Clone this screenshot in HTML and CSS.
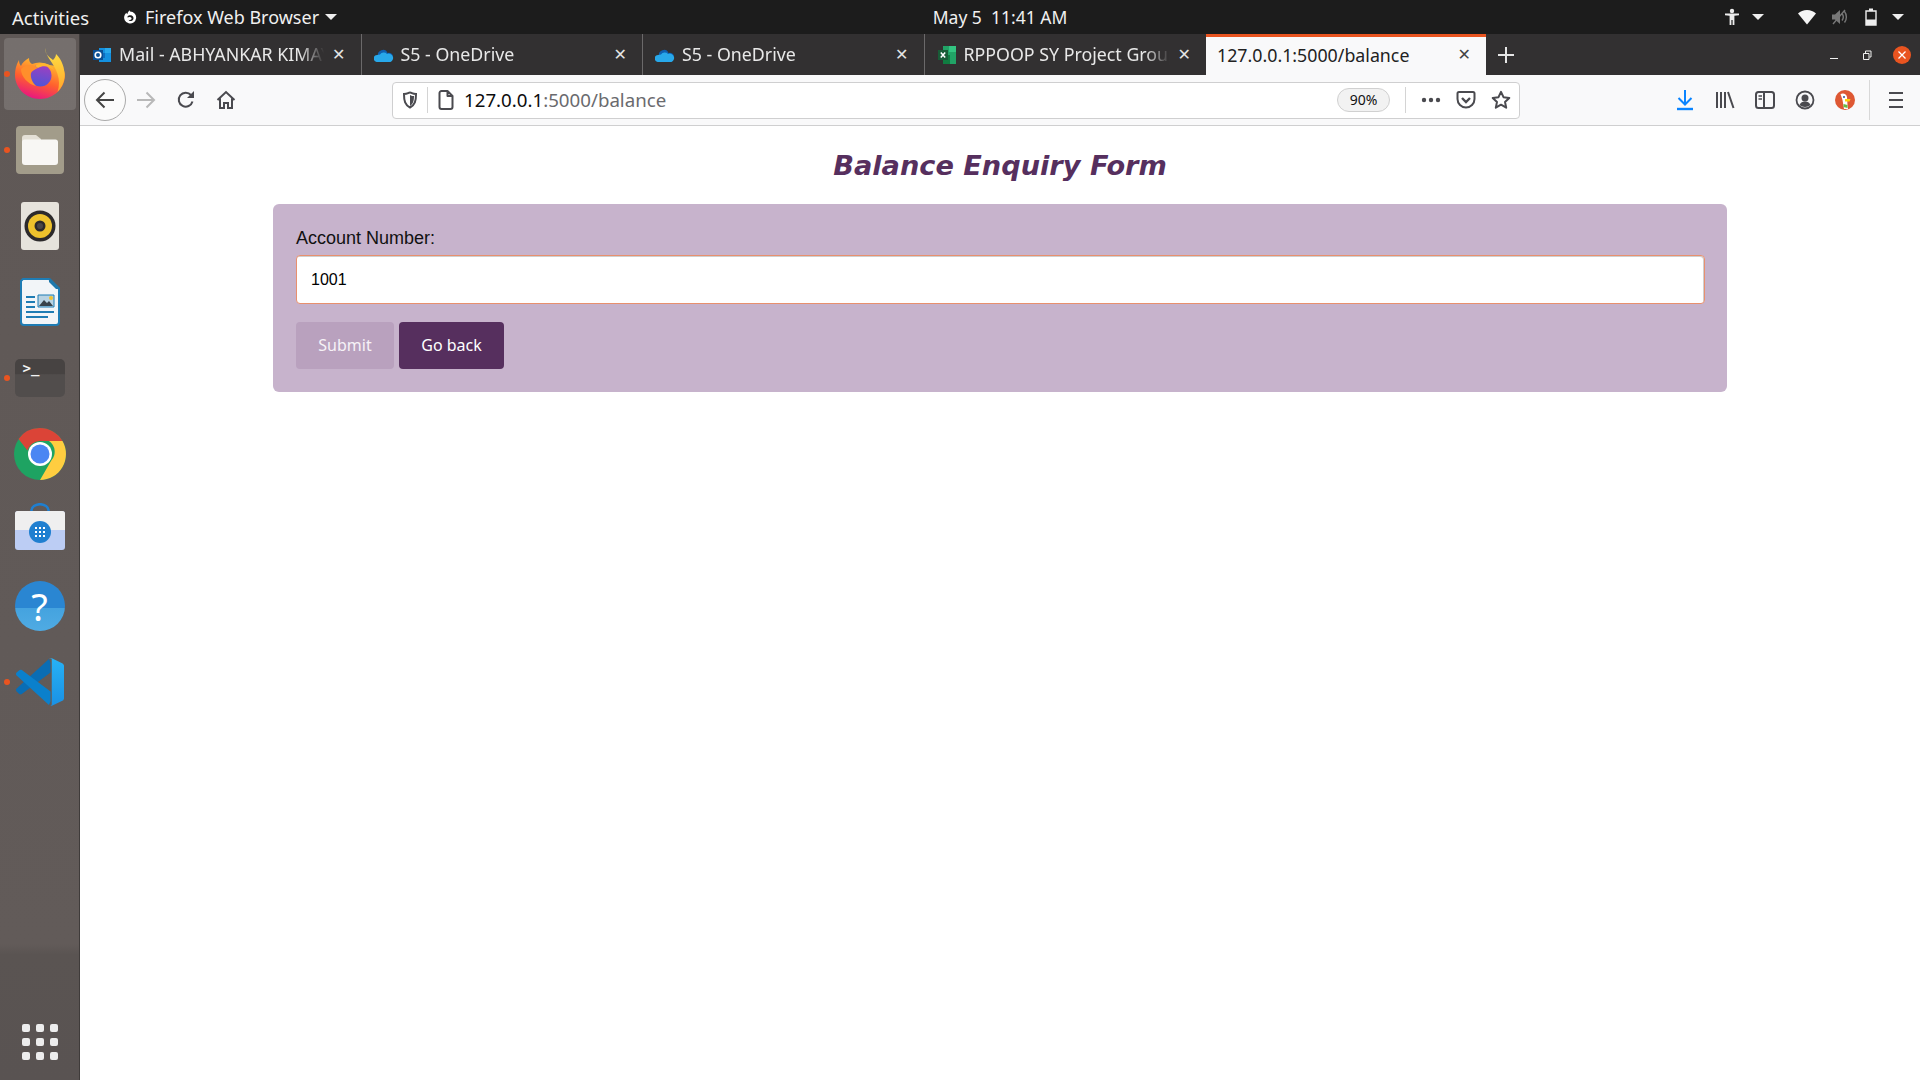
FILE: index.html
```html
<!DOCTYPE html>
<html lang="en">
<head>
<meta charset="utf-8">
<title>Balance Enquiry Form</title>
<link rel="stylesheet" href="styles.css">
</head>
<body>
<svg class="defs" width="0" height="0" aria-hidden="true">
  <defs>
    <linearGradient id="ffBody" x1="0.75" y1="0.1" x2="0.4" y2="1">
      <stop offset="0" stop-color="#ffc02e"/><stop offset="0.55" stop-color="#ff5f2e"/><stop offset="1" stop-color="#e8177f"/>
    </linearGradient>
    <linearGradient id="ffFlame" x1="0.5" y1="0" x2="0.5" y2="1">
      <stop offset="0" stop-color="#ffe445"/><stop offset="1" stop-color="#ffa52b"/>
    </linearGradient>
    <linearGradient id="ffGlobe" x1="0.6" y1="0" x2="0.4" y2="1">
      <stop offset="0" stop-color="#a13fc0"/><stop offset="1" stop-color="#4d55d6"/>
    </linearGradient>
    <linearGradient id="vsRight" x1="0" y1="0" x2="0" y2="1">
      <stop offset="0" stop-color="#27b2f6"/><stop offset="1" stop-color="#1a91e4"/>
    </linearGradient>
  </defs>
</svg>

<header class="topbar">
  <div class="top-left">
    <span class="top-activities">Activities</span>
    <span class="top-app">
      <svg class="top-app-icon" viewBox="0 0 16 16"><path fill="#fff" d="M8 2.500A6 6 0 1 1 2.600 6.200C3 5 3.800 4.200 4.600 3.700 4.500 4.600 4.900 5 5.400 5.200 5.500 3.600 6.500 2.200 8 1.300 7.800 1.900 7.900 2.200 8 2.500z"/><path fill="#1d1d1d" d="M5.500 7.500c1-1.500 4-2 5.500 0 1 1.500 .5 3.500-1 4.200-1.500.6-3 0-3.500-1 1 .5 2.500.3 3-.7.300-.8-.2-1.600-1-1.800-1-.3-2 0-3 .300z"/></svg>
      Firefox Web Browser
      <i class="caret"></i>
    </span>
  </div>
  <div class="top-clock">May 5&nbsp; 11:41 AM</div>
  <div class="top-right">
    <svg class="tray-a11y" width="16" height="18" viewBox="0 0 16 18"><circle cx="8" cy="3" r="2.200" fill="#eee"/><path fill="#eee" d="M1 5.500h14v1.700l-4.600.6V17H8.600v-5H7.400v5H5.600V7.800L1 7.200z"/></svg>
    <i class="caret caret-a11y"></i>
    <svg class="tray-wifi" width="20" height="16" viewBox="0 0 20 16"><path fill="#f4f4f4" d="M10 15.500 1 4.500C3.400 2.400 6.500 1 10 1s6.600 1.400 9 3.500z"/></svg>
    <svg class="tray-vol" width="18" height="18" viewBox="0 0 18 18"><path fill="#777" d="M1 6.500h3L9 2v14l-5-4.500H1z"/><path fill="none" stroke="#777" stroke-width="1.400" d="M11 5.500c1.500 2 1.500 5 0 7M13.500 3.500c2.500 3.200 2.500 7.800 0 11M2 16 14 2"/></svg>
    <svg class="tray-batt" width="12" height="18" viewBox="0 0 12 18"><path fill="none" stroke="#eee" stroke-width="1.400" d="M1 3h10v14H1z"/><path fill="#eee" d="M4 .5h4V3H4zM1 11.500h10V17H1z"/></svg>
    <i class="caret caret-batt"></i>
  </div>
</header>

<div class="desktop">
  <nav class="dock">
    <div class="dock-item is-active is-running">
      <svg width="50" height="52" viewBox="0 0 50 52">
        <path fill="url(#ffBody)" d="M25 51C11 51 0 40 0 27c0-5 1-10 4-15 0 3 1 5 2 6 1-3 4-6 8-8 0 3 1 5 3 6 5-2 10-2 15 0 7 3 18 1 18 11 0 13-11 24-25 24z"/>
        <path fill="url(#ffFlame)" d="M30 0c0 6 4 9 8 12 2-2 3-4 3-6 6 6 9 14 8.500 23-.5 6-3 11-7 15 2-6 2-12 0-18C40 16 31 10 30 0z"/>
        <circle cx="25.500" cy="27.500" r="11" fill="url(#ffGlobe)"/>
        <path fill="#ff8f2b" d="M6 21c4-4 9-5 14-3l3 2c-3 1-6 3-7 5-1 5 2 10 5 13-8-2-15-9-15-17z"/>
        <path fill="#ffb52e" d="M20 18c6-5 15-3 19 4-5-4-11-5-16-2z"/>
      </svg>
    </div>
    <div class="dock-item is-running">
      <div class="dock-files">
        <svg width="36" height="30" viewBox="0 0 36 30"><path fill="#e4e0d6" d="M3 0h11l5 4v6H0V3a3 3 0 0 1 3-3z"/><path fill="#f8f7f4" d="M0 7c0-1.500 1-2.500 2.500-2.500h31C35 4.500 36 5.500 36 7v20a3 3 0 0 1-3 3H3a3 3 0 0 1-3-3z"/></svg>
      </div>
    </div>
    <div class="dock-item">
      <div class="dock-speaker">
        <svg width="32" height="32" viewBox="0 0 32 32"><circle cx="16" cy="16" r="15.500" fill="#2c2a2b"/><circle cx="16" cy="16" r="12" fill="#eec22c"/><circle cx="16" cy="16" r="5.500" fill="#2c2a2b"/><circle cx="16" cy="16" r="3" fill="#4a4748"/></svg>
      </div>
    </div>
    <div class="dock-item">
      <svg width="40" height="48" viewBox="0 0 40 48">
        <path fill="#f2f5f8" stroke="#1e7cb4" stroke-width="2" d="M3 1h26l10 10v33a3 3 0 0 1-3 3H4a3 3 0 0 1-3-3V3z"/>
        <path fill="#1e78ab" d="M30 0l10 10v1h-4l-7-7V0z"/>
        <path fill="#1e7cb4" d="M6 18h9v2H6zM6 23h9v2H6zM6 28h9v2H6zM6 33h28v2H6zM6 38h22v2H6z"/>
        <path fill="#b9d3e3" stroke="#1e7cb4" d="M18 17h16v12H18z"/>
        <path fill="#39424a" d="M19 28l5-6 3 3 2-2 4 5z"/>
        <circle cx="31" cy="20" r="2" fill="#f2c230"/>
      </svg>
    </div>
    <div class="dock-item is-running">
      <div class="dock-term"><span class="dock-term-text">&gt;_</span></div>
    </div>
    <div class="dock-item">
      <svg width="52" height="52" viewBox="0 0 52 52">
        <circle cx="26" cy="26" r="26" fill="#1ea362"/>
        <path fill="#db4437" d="M26 0a26 26 0 0 1 22.500 13H26a13 13 0 0 0-12.500 9.500L4.500 11A26 26 0 0 1 26 0z"/>
        <path fill="#ffcd40" d="M48.500 13A26 26 0 0 1 26 52l11.300-19.500A13 13 0 0 0 35 13z"/>
        <circle cx="26" cy="26" r="12" fill="#fff"/>
        <circle cx="26" cy="26" r="9.500" fill="#4a86f3"/>
      </svg>
    </div>
    <div class="dock-item">
      <svg class="dock-store" width="50" height="47" viewBox="0 0 50 47">
        <path fill="none" stroke="#1f7fd0" stroke-width="2.500" d="M16.500 10V7.500a8.500 6.300 0 0 1 17 0V10"/>
        <rect y="8" width="50" height="39" rx="3" fill="#bccdf4"/>
        <path fill="#efefef" d="M3 8h44a3 3 0 0 1 3 3v16H0V11a3 3 0 0 1 3-3z"/>
        <circle cx="25" cy="29" r="11" fill="#1f7fd0"/>
        <path fill="#fff" d="M20 24h2v2h-2zM24 24h2v2h-2zM28 24h2v2h-2zM20 28h2v2h-2zM24 28h2v2h-2zM28 28h2v2h-2zM20 32h2v2h-2zM24 32h2v2h-2zM28 32h2v2h-2z"/>
      </svg>
    </div>
    <div class="dock-item">
      <div class="dock-help"><span class="dock-help-mark">?</span></div>
    </div>
    <div class="dock-item is-running">
      <svg width="48" height="50" viewBox="0 0 100 100">
        <path fill="#0a6db4" d="M1.300 63.600 68.700 2.100 72 10v20L12.100 75c-1.600 1.200-3.800 1.100-5.300-.2l-5.500-5c-1.800-1.700-1.800-4.500 0-6.200z"/>
        <path fill="#0a80cc" d="M1.300 36.500c-1.800-1.700-1.800-4.600 0-6.200l5.500-5c1.500-1.300 3.700-1.400 5.300-.2L72 70v20l-3.300 7.900z"/>
        <path fill="url(#vsRight)" d="M69.500 1.500c1.900-1.400 4.300-1.600 6.400-.6l20.100 9.900c2.600 1.100 4 3.300 4 5.600v67.200c0 2.400-1.300 4.600-3.500 5.600l-20.600 9.900c-2 .9-4.500.7-6.400-.6 2 2 5 .5 5-2V3.500c0-2.500-3-4-5-2z"/>
      </svg>
    </div>
    <div class="dock-grid">
      <i></i><i></i><i></i><i></i><i></i><i></i><i></i><i></i><i></i>
    </div>
  </nav>

  <div class="browser">
    <div class="tabbar">
      <div class="tab">
        <svg class="tab-icon" width="20" height="20" viewBox="0 0 20 20"><path fill="#1490df" d="M7 3h12v14H7z"/><path fill="#28a8ea" d="M13 3h6v5h-6z"/><path fill="#0f6cbd" d="M7 8h6v5H7z"/><path fill="#0a4f94" d="M1 5h10v10H1z"/><circle cx="6" cy="10" r="2.800" fill="none" stroke="#fff" stroke-width="1.600"/></svg>
        <span class="tab-title">Mail - ABHYANKAR KIMAYA</span>
        <span class="tab-close">&#10005;</span>
      </div>
      <div class="tab">
        <svg class="tab-icon" width="20" height="14" viewBox="0 0 20 14"><path fill="#0f5fb0" d="M4 8a5 5 0 0 1 9.500-3A4 4 0 0 1 19 8z"/><path fill="#28a8ea" d="M3.500 14a3.500 3.500 0 0 1-.5-7l3-.5A4.500 4.500 0 0 1 13 6a3.800 3.800 0 0 1 3.500 8z"/></svg>
        <span class="tab-title">S5 - OneDrive</span>
        <span class="tab-close">&#10005;</span>
      </div>
      <div class="tab">
        <svg class="tab-icon" width="20" height="14" viewBox="0 0 20 14"><path fill="#0f5fb0" d="M4 8a5 5 0 0 1 9.500-3A4 4 0 0 1 19 8z"/><path fill="#28a8ea" d="M3.500 14a3.500 3.500 0 0 1-.5-7l3-.5A4.500 4.500 0 0 1 13 6a3.800 3.800 0 0 1 3.500 8z"/></svg>
        <span class="tab-title">S5 - OneDrive</span>
        <span class="tab-close">&#10005;</span>
      </div>
      <div class="tab">
        <svg class="tab-icon" width="20" height="20" viewBox="0 0 20 20"><path fill="#21a366" d="M6 1h13v18H6z"/><path fill="#33c481" d="M12 1h7v6h-7z"/><path fill="#107c41" d="M6 10h7v9H6z"/><path fill="#185c37" d="M1 5h10v10H1z"/><path stroke="#fff" stroke-width="1.500" d="m3.800 7.500 4.400 5M8.200 7.500l-4.400 5"/></svg>
        <span class="tab-title">RPPOOP SY Project Group</span>
        <span class="tab-close">&#10005;</span>
      </div>
      <div class="tab tab-active">
        <span class="tab-title">127.0.0.1:5000/balance</span>
        <span class="tab-close">&#10005;</span>
      </div>
      <svg class="tab-new" width="20" height="20" viewBox="0 0 20 20"><path fill="none" stroke="#e6e6e6" stroke-width="2" d="M10 2v16M2 10h16"/></svg>
      <div class="win-controls">
        <svg width="12" height="12" viewBox="0 0 12 12"><path stroke="#f0f0f0" d="M2 9.500h8"/></svg>
        <svg width="12" height="12" viewBox="0 0 12 12"><path fill="none" stroke="#f0f0f0" d="M2.500 4.500h5.500v6H2.500zM4.500 4V2h5.500v6H8.500"/></svg>
        <span class="win-close"><svg width="10" height="10" viewBox="0 0 10 10"><path stroke="#fff" stroke-width="1.300" d="m1.500 1.500 7 7M8.500 1.500l-7 7"/></svg></span>
      </div>
    </div>

    <div class="toolbar">
      <span class="nav-back">
        <svg width="20" height="20" viewBox="0 0 20 20"><path fill="none" stroke="#444" stroke-width="2" d="M19 10H2M9.500 2.500 2 10l7.500 7.500"/></svg>
      </span>
      <span class="tool-slot">
        <svg width="20" height="20" viewBox="0 0 20 20"><path fill="none" stroke="#b8b8b8" stroke-width="2" d="M1 10h17M10.500 2.500 18 10l-7.500 7.500"/></svg>
      </span>
      <span class="tool-slot">
        <svg width="20" height="20" viewBox="0 0 20 20"><path fill="none" stroke="#4a4a4f" stroke-width="2" d="M16.500 11.500A7 7 0 1 1 15 5"/><path fill="#4a4a4f" d="M18 1v7h-7z"/></svg>
      </span>
      <span class="tool-slot">
        <svg width="20" height="20" viewBox="0 0 20 20"><path fill="none" stroke="#4a4a4f" stroke-width="2" d="M1.500 10 10 2l8.500 8M4 8.500V18h4v-5h4v5h4V8.500"/></svg>
      </span>
      <div class="urlbar">
        <svg class="url-shield" width="16" height="18" viewBox="0 0 16 18"><path fill="none" stroke="#4a4a4f" stroke-width="2" d="M2 3c4 0 4-1.500 6-1.500S10 3 14 3c0 7-1 11-6 13.500C3 14 2 10 2 3z"/><path fill="#4a4a4f" d="M8 4c1.500 1 2.500 1 4 1 0 5-1 8-4 10z"/></svg>
        <i class="url-sep"></i>
        <svg class="url-page" width="16" height="20" viewBox="0 0 16 20"><path fill="none" stroke="#4a4a4f" stroke-width="2" stroke-linejoin="round" d="M1.500 3a2 2 0 0 1 2-2h6l5 5v11a2 2 0 0 1-2 2h-9a2 2 0 0 1-2-2zM9.500 1v5h5"/></svg>
        <span class="url-text"><b class="url-host">127.0.0.1</b>:5000/balance</span>
        <span class="url-zoom">90%</span>
        <i class="url-sep url-sep-right"></i>
        <svg class="url-more" width="20" height="6" viewBox="0 0 20 6"><circle cx="3" cy="3" r="2.200" fill="#4a4a4f"/><circle cx="10" cy="3" r="2.200" fill="#4a4a4f"/><circle cx="17" cy="3" r="2.200" fill="#4a4a4f"/></svg>
        <svg class="url-pocket" width="20" height="20" viewBox="0 0 20 20"><path fill="none" stroke="#4a4a4f" stroke-width="2" d="M3 2h14a1.500 1.500 0 0 1 1.500 1.500V9a8.500 8.500 0 0 1-17 0V3.500A1.500 1.500 0 0 1 3 2z"/><path fill="none" stroke="#4a4a4f" stroke-width="2.400" d="m6 8 4 4 4-4"/></svg>
        <svg class="url-star" width="20" height="20" viewBox="0 0 20 20"><path fill="none" stroke="#4a4a4f" stroke-width="2" stroke-linejoin="round" d="m10 1.800 2.500 5.400 5.800.7-4.300 4 1.200 5.800-5.200-3-5.200 3L6 11.900l-4.300-4 5.800-.7z"/></svg>
      </div>
      <div class="tool-right">
        <span class="tool-slot">
          <svg width="20" height="22" viewBox="0 0 20 22"><path fill="none" stroke="#0a84ff" stroke-width="2" d="M10 1v14M3.500 9l6.500 6.500L16.500 9"/><path stroke="#0a84ff" stroke-width="2.400" d="M2 20h16"/></svg>
        </span>
        <span class="tool-slot">
          <svg width="20" height="20" viewBox="0 0 20 20"><path stroke="#4a4a4f" stroke-width="2" d="M2 2v16M6 2v16M10 2v16M13 2l5.500 16"/></svg>
        </span>
        <span class="tool-slot">
          <svg width="20" height="20" viewBox="0 0 20 20"><rect x="1" y="2" width="18" height="16" rx="2.500" fill="none" stroke="#4a4a4f" stroke-width="2"/><path stroke="#4a4a4f" stroke-width="2" d="M9 2v16"/><path stroke="#4a4a4f" stroke-width="1.500" d="M3.500 6H7M3.500 9H7"/></svg>
        </span>
        <span class="tool-slot">
          <svg width="20" height="20" viewBox="0 0 20 20"><circle cx="10" cy="10" r="8.500" fill="none" stroke="#4a4a4f" stroke-width="1.800"/><circle cx="10" cy="8" r="3.500" fill="#4a4a4f"/><path fill="#4a4a4f" d="M4.500 15c1-2.500 3-3.500 5.500-3.500s4.500 1 5.500 3.500c-3 2.500-8 2.500-11 0z"/></svg>
        </span>
        <span class="tool-slot">
          <svg width="20" height="20" viewBox="0 0 20 20"><circle cx="10" cy="10" r="10" fill="#de5833"/><path fill="#fff" d="M5.500 4c3-1.500 6 0 6.500 3l.5 8 .5 4H9L7.500 10z"/><path fill="#fdd20a" d="M10 9h5.500l-1 2.500H10z"/><path fill="#65bc46" d="M8.500 14l4 1v3l-4-1z"/><circle cx="9" cy="7" r="1" fill="#2d4f8e"/></svg>
        </span>
        <i class="tool-sep"></i>
        <span class="tool-slot tool-menu">
          <svg width="20" height="18" viewBox="0 0 20 18"><path stroke="#4a4a4f" stroke-width="2.200" d="M3 2h14M3 9h14M3 16h14"/></svg>
        </span>
      </div>
    </div>

    <main class="page">
      <h1 class="page-title">Balance Enquiry Form</h1>
      <form class="card">
        <label class="field-label" for="acc">Account Number:</label>
        <input class="field-input" id="acc" type="text" value="1001">
        <div class="actions">
          <button class="btn btn-submit" type="button">Submit</button>
          <button class="btn btn-back" type="button">Go back</button>
        </div>
      </form>
    </main>
  </div>
</div>
</body>
</html>
```
FILE: styles.css
```css
* { box-sizing: border-box; }
html, body { height: 100%; }
body {
  margin: 0;
  height: 1080px;
  overflow: hidden;
  display: flex;
  flex-direction: column;
  font-family: "Noto Sans", "Open Sans", sans-serif;
  background: #fff;
}
.defs { position: absolute; }
svg { display: block; flex: none; }

/* GNOME top bar */
.topbar {
  height: 34px;
  flex: none;
  background: #1c1c1c;
  color: #f0f0f0;
  font-size: 18px;
  display: grid;
  grid-template-columns: 1fr auto 1fr;
  align-items: center;
}
.top-left { display: flex; align-items: center; padding-left: 12px; }
.top-activities { width: 110px; font-size: 18.500px; }
.top-app { display: flex; align-items: center; }
.top-app-icon { width: 16px; height: 16px; margin-right: 7px; }
.caret {
  display: block;
  width: 0;
  height: 0;
  border-left: 6px solid transparent;
  border-right: 6px solid transparent;
  border-top: 6px solid #eee;
}
.top-app .caret { margin-left: 6px; }
.top-clock { font-size: 17.500px; padding-left: 80px; padding-bottom: 1px; }
.top-right { display: flex; align-items: center; justify-content: flex-end; padding-right: 16px; }
.caret-a11y { margin-left: 12px; }
.tray-wifi { margin-left: 33px; }
.tray-vol { margin-left: 14px; }
.tray-batt { margin-left: 16px; }
.caret-batt { margin-left: 15px; }

/* Desktop */
.desktop { flex: 1; display: flex; min-height: 0; }

/* Ubuntu dock */
.dock {
  width: 80px;
  flex: none;
  padding-top: 2px;
  display: flex;
  flex-direction: column;
  border-right: 1px solid #3f3b3a;
  background: linear-gradient(#5f5856 0, #625b59 87%, #5a5452 88%, #595352 100%);
}
.dock-item {
  height: 76px;
  flex: none;
  display: flex;
  align-items: center;
  justify-content: center;
  position: relative;
}
.is-active::before {
  content: "";
  position: absolute;
  inset: 2px 3px 2px 4px;
  border-radius: 4px;
  background: rgba(255, 255, 255, 0.14);
}
.dock-item > * { position: relative; }
.is-running::after {
  content: "";
  position: absolute;
  left: 4px;
  top: 35px;
  width: 6px;
  height: 6px;
  border-radius: 50%;
  background: #e95420;
}
.dock-files {
  width: 48px;
  height: 48px;
  border-radius: 4px;
  background: #a29c8a;
  display: flex;
  align-items: center;
  justify-content: center;
}
.dock-speaker {
  width: 38px;
  height: 48px;
  border-radius: 3px;
  background: #e6e3dc;
  display: flex;
  align-items: center;
  justify-content: center;
}
.dock-term {
  width: 50px;
  height: 38px;
  border-radius: 5px;
  background: linear-gradient(#474342 0, #474342 40%, #514d4c 41%, #514d4c 100%);
}
.dock-store { margin-bottom: 8px; }
.dock-term-text {
  display: block;
  padding-left: 8px;
  font: 700 14px/18px "DejaVu Sans Mono", monospace;
  color: #f2f2f2;
}
.dock-help {
  width: 50px;
  height: 50px;
  border-radius: 50%;
  background: linear-gradient(#2a86d2 0, #2a86d2 54%, #45a3df 55%, #4fabe3 100%);
  display: flex;
  align-items: center;
  justify-content: center;
}
.dock-help-mark { color: #fff; font: 400 38px/50px "Noto Sans", sans-serif; }
.dock-grid {
  margin-top: auto;
  margin-bottom: 20px;
  align-self: center;
  display: grid;
  grid-template-columns: repeat(3, 8px);
  grid-auto-rows: 8px;
  gap: 6px;
}
.dock-grid i { background: #ededed; border-radius: 2px; }

/* Browser */
.browser { flex: 1; min-width: 0; display: flex; flex-direction: column; }

.tabbar {
  height: 41px;
  flex: none;
  display: flex;
  align-items: stretch;
  background: #323031;
  color: #e8e8e8;
  font-size: 17.800px;
}
.tab {
  width: 281.500px;
  flex: none;
  padding-left: 12px;
  padding-right: 15px;
  display: flex;
  align-items: center;
  border-right: 1px solid #6b696a;
}
.tab:nth-child(4) { border-right: 0; }
.tab-icon { margin-right: 7px; }
.tab-title {
  flex: 1;
  min-width: 0;
  padding-bottom: 1px;
  white-space: nowrap;
  overflow: hidden;
  -webkit-mask-image: linear-gradient(90deg, #000 88%, transparent 100%);
  mask-image: linear-gradient(90deg, #000 88%, transparent 100%);
}
.tab-close { font: 16px/1 "DejaVu Sans", sans-serif; margin-left: 8px; color: #e4e4e4; }
.tab-active {
  width: 280px;
  padding-left: 11px;
  padding-bottom: 2px;
  background: #f9f9fa;
  color: #222;
  border-right: 0;
  border-top: 3px solid #e95420;
}
.tab-active .tab-title { -webkit-mask-image: none; mask-image: none; }
.tab-active .tab-close { color: #444; }
.tab-new { align-self: center; margin-left: 10px; }
.win-controls {
  margin-left: auto;
  padding-right: 9px;
  display: flex;
  align-items: center;
  gap: 21px;
}
.win-close {
  width: 18px;
  height: 18px;
  margin-left: -1px;
  border-radius: 50%;
  background: #e95420;
  display: flex;
  align-items: center;
  justify-content: center;
}

.toolbar {
  height: 51px;
  flex: none;
  display: flex;
  align-items: center;
  padding-left: 4px;
  background: #f9f9fa;
  border-bottom: 1px solid #cfcfd0;
}
.nav-back {
  width: 42px;
  height: 42px;
  border: 1px solid #aaa;
  border-radius: 50%;
  background: #fbfbfb;
  display: flex;
  align-items: center;
  justify-content: center;
}
.tool-slot { width: 40px; height: 40px; flex: none; display: flex; align-items: center; justify-content: center; }
.urlbar {
  width: 1128px;
  height: 37px;
  margin-left: 146px;
  padding-left: 9px;
  flex: none;
  display: flex;
  align-items: center;
  background: #fff;
  border: 1px solid #cfcfd0;
  border-radius: 4px;
}
.url-sep { width: 1px; height: 26px; margin-left: 9px; background: #d4d4d4; }
.url-page { margin-left: 10px; }
.url-text { margin-left: 10px; padding-bottom: 2px; flex: 1; font-size: 18.700px; color: #6a6a6e; }
.url-host { font-weight: 400; color: #0c0c0d; }
.url-zoom {
  width: 53px;
  height: 24px;
  border: 1px solid #d0d0d0;
  border-radius: 12px;
  background: #f2f2f2;
  color: #111;
  font-size: 14px;
  line-height: 22px;
  text-align: center;
}
.url-sep-right { margin-left: 15px; }
.url-more { margin-left: 15px; }
.url-pocket { margin-left: 15px; }
.url-star { margin-left: 15px; margin-right: 8px; }
.tool-right { margin-left: auto; padding-right: 4px; display: flex; align-items: center; }
.tool-sep { width: 1px; height: 40px; margin-left: 4px; background: #d8d8d8; }
.tool-menu { margin-left: 6px; }

/* Page */
.page { flex: 1; background: #fff; }
.page-title {
  margin: 24px 0 22px;
  text-align: center;
  font: italic 700 27.200px/32px "DejaVu Sans", sans-serif;
  color: #562f5e;
}
.card {
  width: 1454px;
  margin: 0 auto;
  padding: 23px 22px 23px 23px;
  background: #c7b3cc;
  border-radius: 6px;
}
.field-label {
  display: block;
  height: 22px;
  margin-bottom: 6px;
  font: 18px/22px "Liberation Sans", Arial, sans-serif;
  color: #111;
}
.field-input {
  display: block;
  width: 100%;
  height: 49px;
  padding: 0 14px;
  border: 1px solid #e8906e;
  border-radius: 4px;
  outline: 0;
  background: #fff;
  box-shadow: inset -1px 1px 0 #cfcfcf;
  font: 16px "Liberation Sans", Arial, sans-serif;
  color: #000;
}
.actions { margin-top: 18px; display: flex; gap: 5px; }
.btn {
  height: 47px;
  padding: 0 0 2px;
  border: 0;
  border-radius: 4px;
  font: 16px "Noto Sans", sans-serif;
  color: #fff;
}
.btn-submit { width: 98px; background: #b9a1be; color: #f6f2f7; }
.btn-back { width: 105px; background: #562f5e; }
```
